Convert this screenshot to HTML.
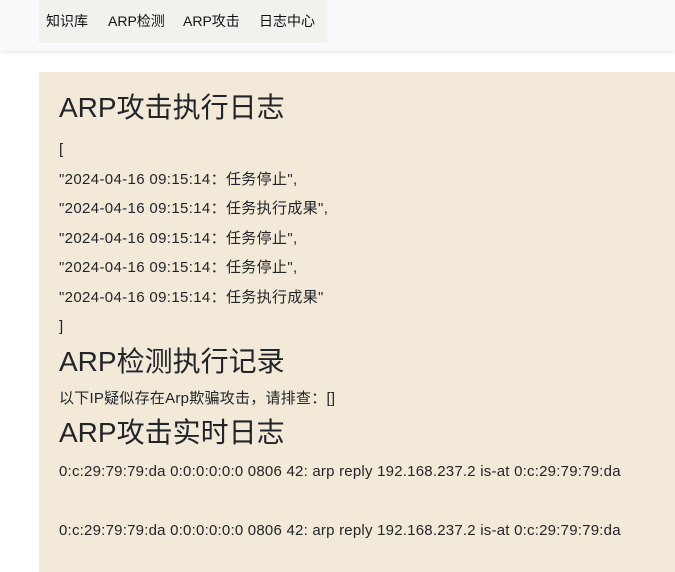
<!DOCTYPE html>
<html><head><meta charset="utf-8"><style>
body{margin:0;width:675px;height:563px;overflow:hidden;background:#fff;font-family:"Liberation Sans","Noto Sans CJK SC",sans-serif;color:#212529;position:relative}
.nav{position:absolute;left:0;top:0;width:675px;height:51px;background:#f8f9fa;box-shadow:0 2px 4px rgba(0,0,0,.08)}
.navin{position:absolute;left:39px;top:0;width:288px;height:43px;background:#f1f2ee}
.navin span{position:absolute;top:11px;font-size:14px;line-height:20px;color:#111}
.box{position:absolute;left:39px;top:72px;width:640px;height:500px;background:#f3e9d8}
.t{position:absolute;left:59px;white-space:nowrap}
h1{margin:0;font-weight:normal;font-size:28px;line-height:36px}
.l{font-size:15px;line-height:20px;letter-spacing:0.22px}
.d{letter-spacing:0.35px}
</style></head><body>
<div class="nav"><div class="navin">
<span style="left:7px">知识库</span><span style="left:69px">ARP检测</span><span style="left:144px">ARP攻击</span><span style="left:220px">日志中心</span>
</div></div>
<div class="box"></div>
<h1 class="t" style="top:90px">ARP攻击执行日志</h1>
<div class="t l" style="top:140px">[</div>
<div class="t l d" style="top:170px">"2024-04-16 09:15:14：任务停止",</div>
<div class="t l d" style="top:199px">"2024-04-16 09:15:14：任务执行成果",</div>
<div class="t l d" style="top:229px">"2024-04-16 09:15:14：任务停止",</div>
<div class="t l d" style="top:258px">"2024-04-16 09:15:14：任务停止",</div>
<div class="t l d" style="top:288px">"2024-04-16 09:15:14：任务执行成果"</div>
<div class="t l" style="top:317px">]</div>
<h1 class="t" style="top:344px">ARP检测执行记录</h1>
<div class="t l" style="top:389px;font-size:15px;letter-spacing:0.25px">以下IP疑似存在Arp欺骗攻击，请排查：[]</div>
<h1 class="t" style="top:415px">ARP攻击实时日志</h1>
<div class="t l" style="top:462px">0:c:29:79:79:da 0:0:0:0:0:0 0806 42: arp reply 192.168.237.2 is-at 0:c:29:79:79:da</div>
<div class="t l" style="top:521px">0:c:29:79:79:da 0:0:0:0:0:0 0806 42: arp reply 192.168.237.2 is-at 0:c:29:79:79:da</div>
</body></html>
